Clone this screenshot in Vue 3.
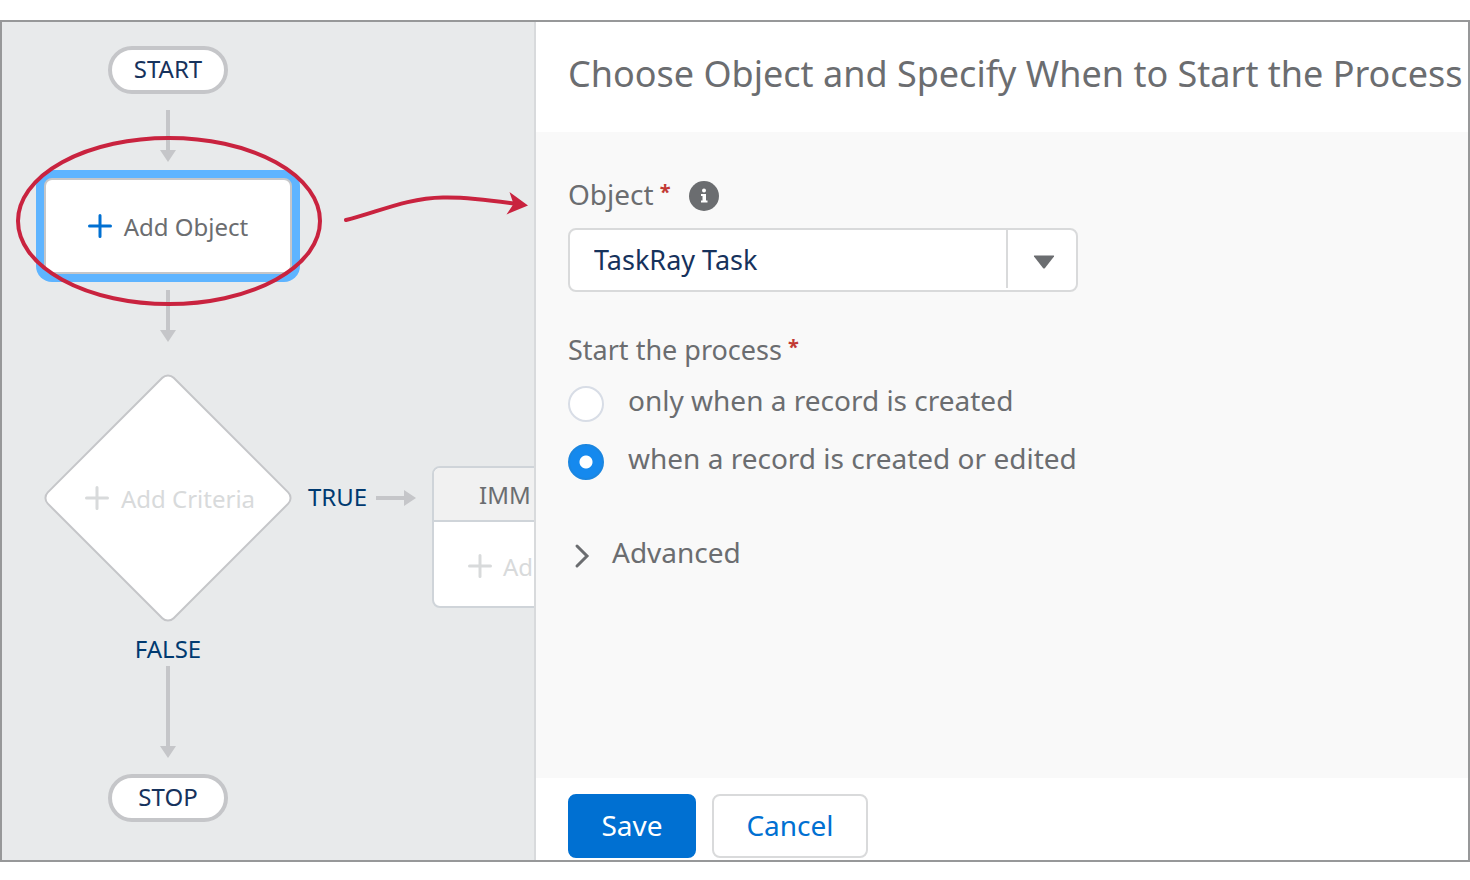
<script setup>
import { ref } from 'vue'

const objects = ['TaskRay Task', 'TaskRay Project', 'Account', 'Opportunity']
const selectedObject = ref('TaskRay Task')

const triggers = [
  { value: 'create', label: 'only when a record is created' },
  { value: 'edit', label: 'when a record is created or edited' },
]
const trigger = ref('edit')
</script>

<template>
  <main class="builder">
    <section class="canvas" aria-label="Process diagram">
      <svg class="layer" width="532" height="838" viewBox="0 0 532 838" aria-hidden="true">
        <g fill="#c5c6c9">
          <path d="M164 88h4v40h6l-8 12-8-12h6z" />
          <path d="M164 268h4v40h6l-8 12-8-12h6z" />
          <path d="M164 644h4v80h6l-8 12-8-12h6z" />
          <path d="M374 474h28v-6l12 8-12 8v-6h-28z" />
        </g>
        <rect x="77" y="387" width="178" height="178" rx="8" transform="rotate(45 166 476)" fill="#fff" stroke="#c5c6c9" stroke-width="2" />
      </svg>

      <div class="pill start">START</div>
      <button class="node object" type="button">
        <svg class="plus" viewBox="0 0 24 24" aria-hidden="true"><path d="M12 1.500v21M1.500 12h21" /></svg>
        <span>Add Object</span>
      </button>
      <button class="node criteria" type="button" disabled>
        <svg class="plus" viewBox="0 0 24 24" aria-hidden="true"><path d="M12 1.500v21M1.500 12h21" /></svg>
        <span>Add Criteria</span>
      </button>
      <span class="branch true">TRUE</span>
      <span class="branch false">FALSE</span>
      <div class="actions">
        <div class="actions-head">IMM</div>
        <button class="actions-add" type="button" disabled>
          <svg class="plus" viewBox="0 0 24 24" aria-hidden="true"><path d="M12 1.500v21M1.500 12h21" /></svg>
          <span>Ad</span>
        </button>
      </div>
      <div class="pill stop">STOP</div>

      <svg class="layer marks" width="532" height="838" viewBox="0 0 532 838" aria-hidden="true">
        <ellipse cx="167" cy="199" rx="151" ry="83" fill="none" stroke="#c9233f" stroke-width="4" />
        <path d="M344 198C374 191 404 176 441 175.500C463 175 488 178 514 182" fill="none" stroke="#c9233f" stroke-width="4" stroke-linecap="round" />
        <path d="M526 183.500L507.500 170 511.500 182 504.500 192.500z" fill="#c9233f" />
      </svg>
    </section>

    <form class="panel" @submit.prevent>
      <header class="panel-head">
        <h1>Choose Object and Specify When to Start the Process</h1>
      </header>

      <div class="panel-body">
        <div class="label-row">
          <label for="object">Object<span class="req">*</span></label>
          <svg class="info" viewBox="0 0 30 30" role="img" aria-label="Information">
            <circle cx="15" cy="15" r="15" fill="#6b6d70" />
            <circle cx="15" cy="9.500" r="2" fill="#fff" />
            <path d="M12 13h5v6.500h1.500v2h-6.500v-2h1.500v-4.500h-1.500z" fill="#fff" />
          </svg>
        </div>
        <div class="select">
          <select id="object" v-model="selectedObject">
            <option v-for="o in objects" :key="o">{{ o }}</option>
          </select>
          <span class="select-arrow">
            <svg width="22" height="14" viewBox="0 0 22 14" aria-hidden="true"><path d="M1.500 .5h19q1 0 .5 1L12 13q-1 1-2 0L1 1.500q-.5-1 .5-1z" fill="#6b6d70" /></svg>
          </span>
        </div>

        <fieldset>
          <legend>Start the process<span class="req">*</span></legend>
          <label v-for="t in triggers" :key="t.value" class="radio">
            <input v-model="trigger" type="radio" name="trigger" :value="t.value" />
            <span>{{ t.label }}</span>
          </label>
        </fieldset>

        <button class="advanced" type="button" aria-expanded="false">
          <svg width="28" height="28" viewBox="0 0 28 28" aria-hidden="true"><path d="M9 4l10 10-10 10" /></svg>
          <span>Advanced</span>
        </button>
      </div>

      <footer class="panel-foot">
        <button class="btn save" type="submit">Save</button>
        <button class="btn cancel" type="button">Cancel</button>
      </footer>
    </form>
  </main>
</template>

<style>
body {
  background: #fff;
}
</style>

<style scoped>
.builder,
.builder * {
  box-sizing: border-box;
}

.builder {
  display: flex;
  min-height: calc(100vh - 38px);
  margin: 20px 0 18px;
  border: 2px solid #979899;
  font-family: "Noto Sans", "Open Sans", sans-serif;
  color: #6b6d70;
}

button,
select {
  font: inherit;
  color: inherit;
}

/* Diagram */
.canvas {
  position: relative;
  flex: 0 0 532px;
  overflow: hidden;
  background: #e8eaeb;
  font-size: 24px;
  line-height: 32px;
}

.layer {
  position: absolute;
  top: 0;
  left: 0;
}

.marks {
  pointer-events: none;
}

.pill {
  position: absolute;
  left: 106px;
  width: 120px;
  height: 48px;
  border: 4px solid #c5c6c9;
  border-radius: 24px;
  background: #fff;
  color: #16325c;
  line-height: 38px;
  text-align: center;
}

.start {
  top: 24px;
}

.stop {
  top: 752px;
}

.node {
  position: absolute;
  display: flex;
  align-items: center;
  justify-content: center;
  gap: 12px;
  padding: 0;
  white-space: nowrap;
}

.node span,
.actions-add span {
  padding-top: 2px;
}

.plus {
  flex: none;
  width: 24px;
  height: 24px;
  fill: none;
  stroke: currentColor;
  stroke-width: 3;
  stroke-linecap: round;
}

.object {
  top: 156px;
  left: 42px;
  width: 248px;
  height: 96px;
  border: 2px solid #c5c6c9;
  border-radius: 8px;
  background: #fff;
  box-shadow: 0 0 0 8px #5eb4ff;
}

.object .plus {
  color: #0070d2;
}

.criteria {
  top: 456px;
  left: 66px;
  width: 204px;
  height: 40px;
  border: 0;
  background: none;
  color: #d8dadb;
}

.branch {
  position: absolute;
  color: #003a70;
}

.true {
  top: 459px;
  left: 306px;
}

.false {
  top: 611px;
  left: 106px;
  width: 120px;
  text-align: center;
}

.actions {
  position: absolute;
  top: 444px;
  left: 430px;
  width: 308px;
  border: 2px solid #cfd4d9;
  border-radius: 8px;
  background: #fff;
  overflow: hidden;
}

.actions-head {
  height: 54px;
  padding-left: 45px;
  border-bottom: 2px solid #cfd4d9;
  background: #f1f1f1;
  line-height: 54px;
  white-space: nowrap;
}

.actions-add {
  display: flex;
  align-items: center;
  gap: 11px;
  height: 84px;
  padding: 4px 34px 0;
  border: 0;
  background: none;
  color: #d8dadb;
}

/* Settings panel */
.panel {
  display: flex;
  flex: 1;
  flex-direction: column;
  min-width: 0;
  border-left: 2px solid #d8dadc;
  background: #fff;
  font-size: 28px;
}

.panel-head {
  padding: 28px 0 34px 32px;
}

h1 {
  margin: 0;
  font-size: 36px;
  font-weight: 400;
  line-height: 48px;
  white-space: nowrap;
}

.panel-body {
  flex: 1;
  padding: 40px 32px;
  background: #f9f9f9;
}

.label-row {
  display: flex;
  align-items: center;
  gap: 18px;
  margin-bottom: 12px;
  line-height: 44px;
}

.req {
  margin-left: 6px;
  color: #c23934;
  font-size: 20px;
  font-weight: 700;
  line-height: 1;
  vertical-align: 6px;
}

.info {
  width: 30px;
  height: 30px;
  margin-top: 4px;
}

.select {
  position: relative;
  max-width: 510px;
}

select {
  display: block;
  width: 100%;
  height: 64px;
  padding: 0 80px 2px 24px;
  border: 2px solid #d9dadb;
  border-radius: 8px;
  background: #fff;
  color: #16325c;
  font-size: 27px;
  appearance: none;
}

.select-arrow {
  position: absolute;
  top: 2px;
  right: 2px;
  bottom: 4px;
  display: flex;
  align-items: center;
  justify-content: center;
  width: 70px;
  padding: 6px 0 0 4px;
  border-left: 2px solid #d9dadb;
  pointer-events: none;
}

fieldset {
  margin: 36px 0 0;
  padding: 0;
  border: 0;
}

legend {
  margin-bottom: 14px;
  padding: 0;
  font-size: 27px;
  line-height: 44px;
}

.radio {
  display: flex;
  gap: 24px;
  margin-bottom: 22px;
  line-height: 28px;
}

.radio input {
  flex: none;
  width: 36px;
  height: 36px;
  margin: 0;
  border: 2px solid #d8dde6;
  border-radius: 50%;
  background: #fff;
  appearance: none;
}

.radio input:checked {
  border-color: #1b86e0;
  background: radial-gradient(circle, #fff 6px, #1589ee 7px);
}

.advanced {
  display: flex;
  align-items: center;
  gap: 16px;
  margin-top: 32px;
  padding: 0;
  border: 0;
  background: none;
  line-height: 36px;
}

.advanced svg {
  margin-top: 8px;
  fill: none;
  stroke: #6b6d70;
  stroke-width: 3;
  stroke-linecap: round;
}

.panel-foot {
  display: flex;
  gap: 16px;
  padding: 16px 32px 2px;
}

.btn {
  min-width: 128px;
  height: 64px;
  padding: 0 31px 2px;
  border: 2px solid #d9dadb;
  border-radius: 8px;
  background: #fff;
  color: #0070d2;
  line-height: 56px;
}

.save {
  border-color: #0070d2;
  background: #0070d2;
  color: #fff;
}

.cancel {
  min-width: 156px;
}
</style>
